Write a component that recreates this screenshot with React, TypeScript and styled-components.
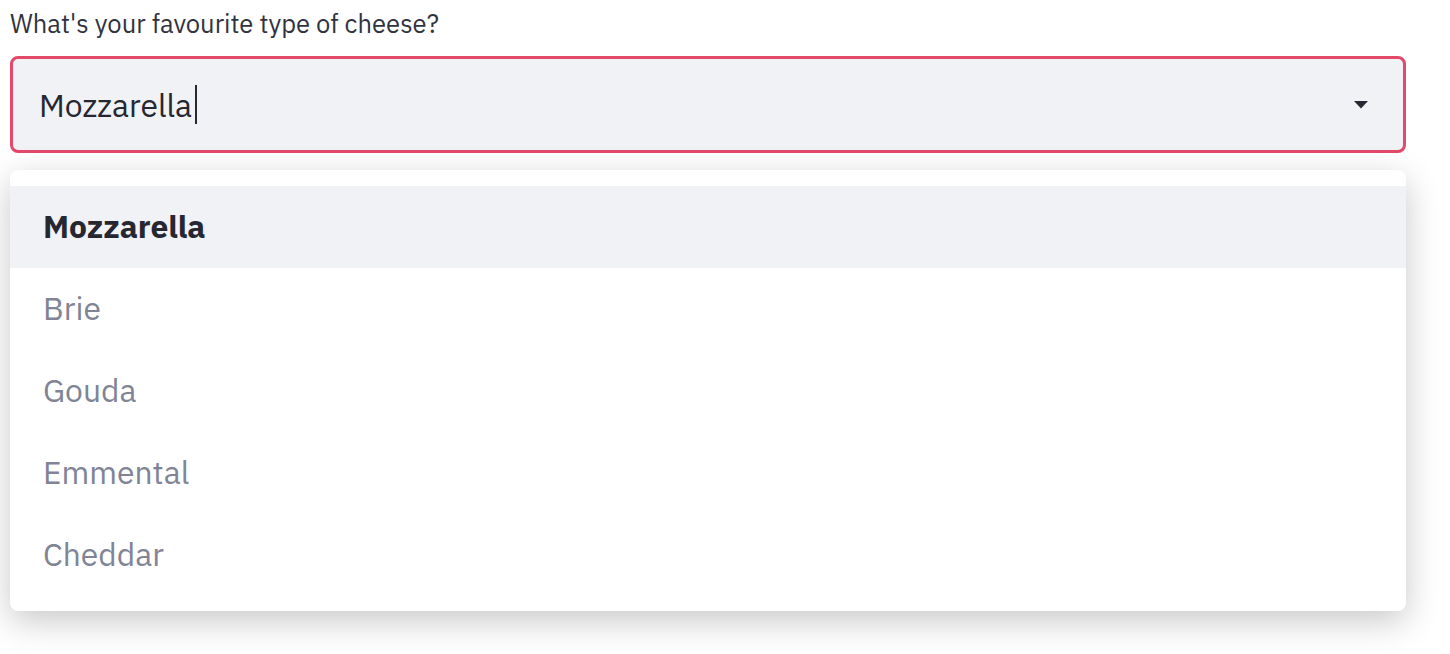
import React from "react";
import styled, { createGlobalStyle } from "styled-components";

const Global = createGlobalStyle`
  html, body { margin: 0; padding: 0; background: #ffffff; }
  body { font-family: "IBM Plex Sans", "Noto Sans", "Open Sans", sans-serif; }
`;

const Page = styled.div`
  width: 1450px;
  height: 654px;
  padding: 7px 44px 0 10px;
  box-sizing: border-box;
  display: flex;
  flex-direction: column;
`;

const Label = styled.label`
  font-size: 25.6px;
  line-height: 33px;
  color: #31333f;
  margin-bottom: 16px;
`;

const Control = styled.div`
  height: 97px;
  box-sizing: border-box;
  border: 3px solid #e34a6a;
  border-radius: 8px;
  background: #f0f2f6;
  display: flex;
  align-items: center;
  padding: 0 35px 0 26px;
`;

const Value = styled.span`
  font-size: 31.8px;
  color: #262730;
  flex: 1;
  display: flex;
  align-items: center;
`;

const Caret = styled.span`
  display: inline-block;
  width: 2px;
  height: 39px;
  background: #262730;
  margin-left: 3px;
`;

const Menu = styled.ul`
  list-style: none;
  margin: 17px 0 0;
  padding: 16px 0 15px;
  background: #ffffff;
  border-radius: 8px;
  box-shadow: 0 10px 34px rgba(0, 0, 0, 0.22);
`;

const Option = styled.li<{ $active?: boolean }>`
  height: 82px;
  box-sizing: border-box;
  padding: 0 0 2px 33px;
  display: flex;
  align-items: center;
  font-size: 31.8px;
  background: ${(p) => (p.$active ? "#f0f2f6" : "transparent")};
  color: ${(p) => (p.$active ? "#262730" : "#808495")};
  font-weight: ${(p) => (p.$active ? 700 : 400)};
`;

const options = ["Mozzarella", "Brie", "Gouda", "Emmental", "Cheddar"];

export default function App() {
  return (
    <>
      <Global />
      <Page>
        <Label>What's your favourite type of cheese?</Label>
        <Control>
          <Value>
            Mozzarella
            <Caret />
          </Value>
          <svg width="14" height="8" viewBox="0 0 14 8">
            <path d="M0 0 H14 L7 7.5 Z" fill="#262730" />
          </svg>
        </Control>
        <Menu>
          {options.map((o, i) => (
            <Option key={o} $active={i === 0}>
              {o}
            </Option>
          ))}
        </Menu>
      </Page>
    </>
  );
}
